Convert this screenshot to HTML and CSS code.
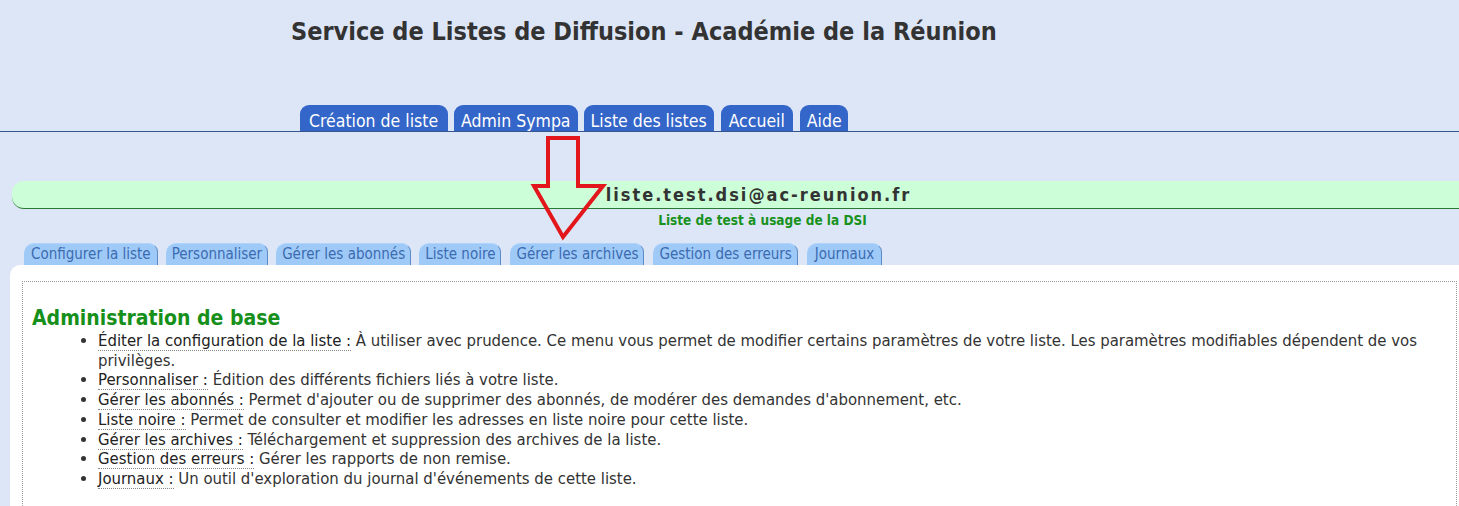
FILE: index.html
```html
<!DOCTYPE html>
<html lang="fr">
<head>
<meta charset="utf-8">
<title>Sympa</title>
<link rel="stylesheet" href="styles.css">
</head>
<body>
<header class="header">
  <h1 class="site-title">Service de Listes de Diffusion - Académie de la Réunion</h1>
  <nav class="main-tabs">
    <a class="main-tab" href="#">Création de liste</a>
    <a class="main-tab" href="#">Admin Sympa</a>
    <a class="main-tab" href="#">Liste des listes</a>
    <a class="main-tab" href="#">Accueil</a>
    <a class="main-tab" href="#">Aide</a>
  </nav>
</header>

<div class="list-banner">
  <span class="list-address">liste.test.dsi@ac-reunion.fr</span>
</div>
<div class="list-subject">Liste de test à usage de la DSI</div>

<nav class="sub-tabs">
  <a class="sub-tab" href="#">Configurer la liste</a>
  <a class="sub-tab" href="#">Personnaliser</a>
  <a class="sub-tab" href="#">Gérer les abonnés</a>
  <a class="sub-tab" href="#">Liste noire</a>
  <a class="sub-tab" href="#">Gérer les archives</a>
  <a class="sub-tab" href="#">Gestion des erreurs</a>
  <a class="sub-tab" href="#">Journaux</a>
</nav>

<main class="content">
  <section class="panel">
    <h2 class="panel-title">Administration de base</h2>
    <ul class="admin-list">
      <li><span class="term">Éditer la configuration de la liste :</span> À utiliser avec prudence. Ce menu vous permet de modifier certains paramètres de votre liste. Les paramètres modifiables dépendent de vos privilèges.</li>
      <li><span class="term">Personnaliser :</span> Édition des différents fichiers liés à votre liste.</li>
      <li><span class="term">Gérer les abonnés :</span> Permet d'ajouter ou de supprimer des abonnés, de modérer des demandes d'abonnement, etc.</li>
      <li><span class="term">Liste noire :</span> Permet de consulter et modifier les adresses en liste noire pour cette liste.</li>
      <li><span class="term">Gérer les archives :</span> Téléchargement et suppression des archives de la liste.</li>
      <li><span class="term">Gestion des erreurs :</span> Gérer les rapports de non remise.</li>
      <li><span class="term">Journaux :</span> Un outil d'exploration du journal d'événements de cette liste.</li>
    </ul>
  </section>
</main>

<svg class="annot-arrow" width="80" height="106" viewBox="0 0 80 106" aria-hidden="true">
  <path d="M18 2 H48 V50 H73 L33 101 L4 50 H18 Z" fill="none" stroke="#e3161b" stroke-width="4" stroke-linejoin="miter"/>
</svg>
</body>
</html>
```

FILE: styles.css
```css
html, body {
  margin: 0;
  padding: 0;
}
body {
  background: #dde6f7;
  font-family: "DejaVu Sans Condensed", "DejaVu Sans", sans-serif;
  color: #333;
  position: relative;
  overflow: hidden;
}
a { text-decoration: none; }

.header {
  padding-top: 16px;
}
.site-title {
  margin: 0 0 0 291px;
  font-size: 25px;
  font-weight: bold;
  color: #333;
  height: 89px;
  line-height: 32px;
}
.main-tabs {
  display: flex;
  gap: 6px;
  padding-left: 300px;
  border-bottom: 1px solid #34568f;
  height: 26px;
  align-items: flex-end;
}
.main-tab {
  background: #3465c8;
  color: #fff;
  font-size: 17.5px;
  line-height: 26px;
  height: 26px;
  padding: 3px 7px 0;
  box-sizing: border-box;
  border-radius: 9px 9px 0 0;
}
.main-tab:first-child {
  padding: 3px 10px 0 9px;
}
.main-tab:nth-child(4) {
  padding: 3px 8px 0;
  margin-left: 1px;
}
.main-tab:nth-child(5) {
  padding: 3px 6px 0 7px;
  margin-left: 1px;
}

.list-banner {
  margin: 49px 0 0 12px;
  height: 27px;
  background: #ccfed8;
  border-bottom: 1px solid #2b7a34;
  border-radius: 12px 0 0 12px;
  display: flex;
  justify-content: center;
  align-items: center;
  padding-left: 46px;
}
.list-address {
  font-size: 18px;
  font-weight: bold;
  letter-spacing: 2px;
  color: #333;
}
.list-subject {
  text-align: center;
  padding-left: 66px;
  font-size: 13.5px;
  font-weight: bold;
  color: #18921c;
  line-height: 22px;
}

.sub-tabs {
  display: flex;
  gap: 8px;
  margin: 12px 0 0 24px;
  height: 22px;
  align-items: flex-end;
}
.sub-tab {
  background: #9fcaf8;
  color: #3b6bb0;
  font-size: 15px;
  line-height: 21px;
  padding: 0 5px 0 6px;
  border-radius: 10px 9px 0 0;
  border-right: 1px solid #5c8cc6;
  border-top: 1px solid #aed4fb;
}
.sub-tab:first-child {
  padding: 0 6px 0 7px;
}
.sub-tab:nth-child(n+5) {
  margin-left: 1px;
}
.sub-tab:last-child {
  padding: 0 7px 0 8px;
}

.content {
  margin-left: 10px;
  background: #fff;
  border-radius: 10px 0 0 0;
  padding: 16px 2px 20px 12px;
  min-height: 240px;
}
.panel {
  border: 1px dotted #9a9a9a;
  padding: 24px 0 20px 9px;
}
.panel-title {
  margin: 0;
  font-size: 21px;
  font-weight: bold;
  color: #16901a;
  line-height: 24px;
}
.admin-list {
  margin: 1px 0 0;
  padding-left: 66px;
  font-size: 16.6px;
  line-height: 19.7px;
  color: #333;
}
.term {
  color: #222;
  border-bottom: 1px dotted #888;
}

.annot-arrow {
  position: absolute;
  left: 530px;
  top: 136px;
}
```
